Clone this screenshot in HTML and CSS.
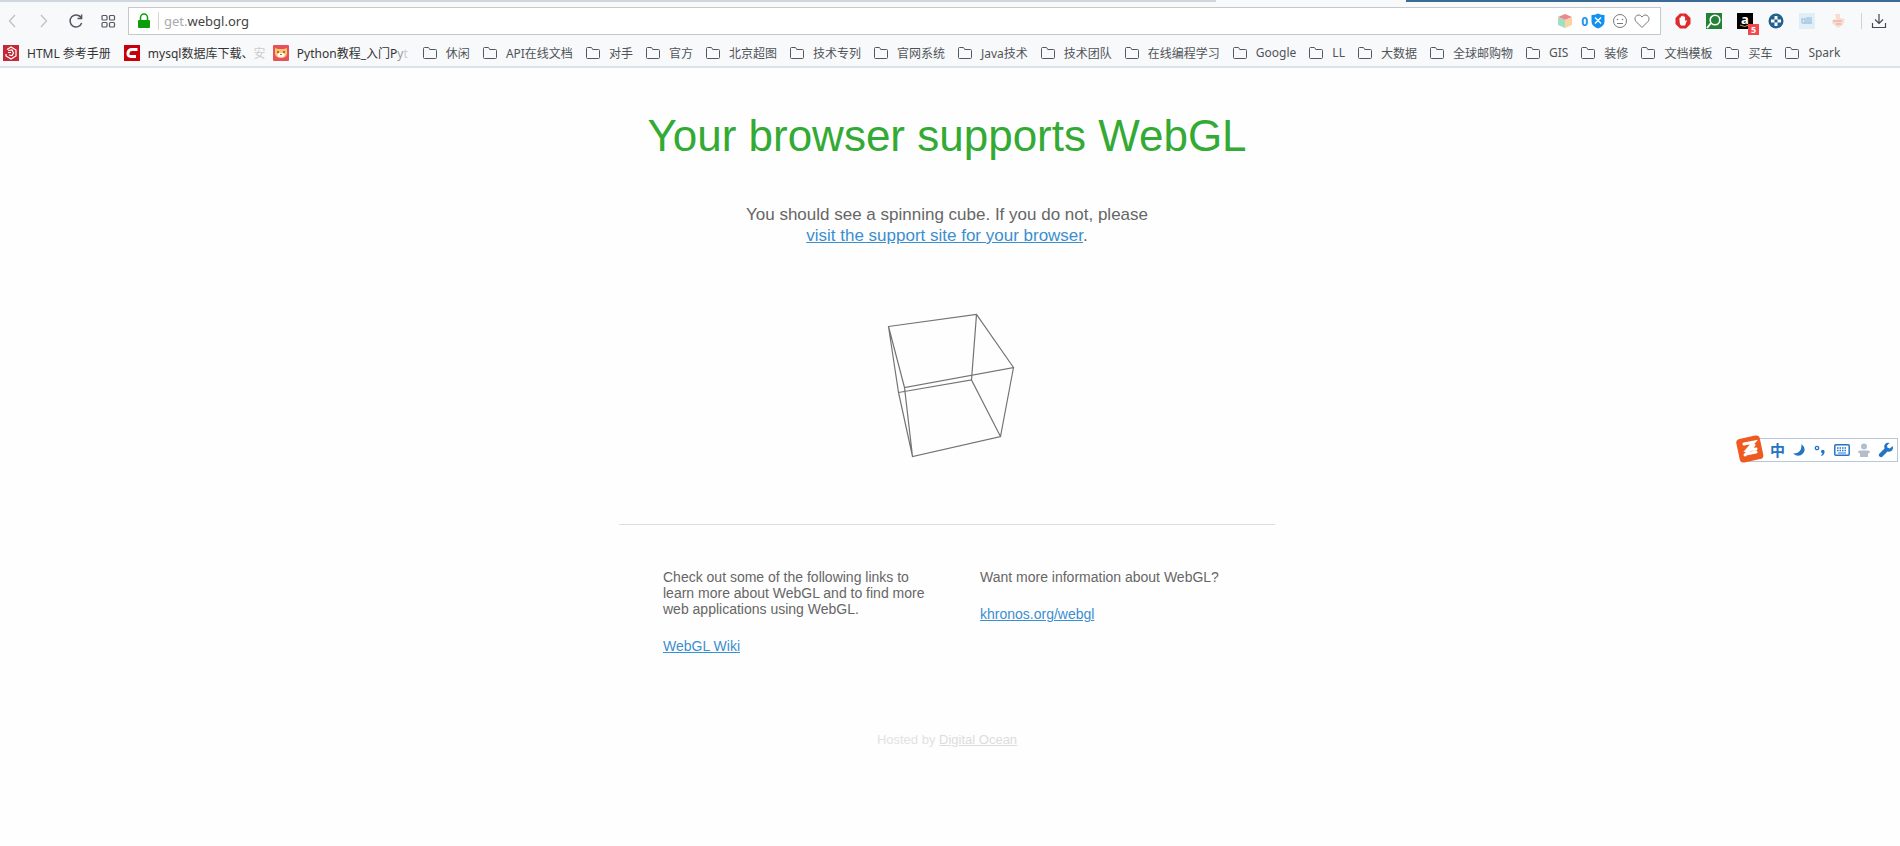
FILE: index.html
```html
<!DOCTYPE html>
<html lang="en">
<head>
  <meta charset="UTF-8">
  <meta name="viewport" content="width=device-width, initial-scale=1.0">
  <title>WebGL</title>
  <link rel="stylesheet" href="styles.css">
</head>
<body>
  <svg class="defs" aria-hidden="true">
    <symbol id="folder" viewBox="0 0 14 14">
      <path d="M.5 2.500q0-1 1-1H5q.7 0 1 .6l.7 1.400h5.800q1 0 1 1v7q0 1-1 1h-11q-1 0-1-1z" fill="none" stroke="#54585c"/>
    </symbol>
  </svg>

  <header class="browser">
    <div class="tab-edge"><span class="edge-left"></span><span class="edge-right"></span></div>

    <div class="toolbar">
      <div class="nav">
        <button aria-label="Back">
          <svg width="16" height="16" viewBox="0 0 16 16"><path d="M11 2 5.500 8 11 14" fill="none" stroke="#bfc2c5" stroke-width="1.300"/></svg>
        </button>
        <button aria-label="Forward">
          <svg width="16" height="16" viewBox="0 0 16 16"><path d="M5 2 10.500 8 5 14" fill="none" stroke="#bfc2c5" stroke-width="1.300"/></svg>
        </button>
        <button aria-label="Reload">
          <svg width="16" height="16" viewBox="0 0 16 16"><path d="M13 4.500A6 6 0 1 0 13.700 10M13.600 1.500V5.500H9.500" fill="none" stroke="#55595d" stroke-width="1.500"/></svg>
        </button>
        <button aria-label="Speed dial">
          <svg width="16" height="16" viewBox="0 0 16 16"><g fill="none" stroke="#55595d" stroke-width="1.200"><rect x="2" y="2.500" width="5" height="4.500" rx="1"/><rect x="9.500" y="2.500" width="5" height="4.500" rx="1"/><rect x="2" y="9.500" width="5" height="4.500" rx="1"/><rect x="9.500" y="9.500" width="5" height="4.500" rx="1"/></g></svg>
        </button>
      </div>

      <div class="address">
        <svg width="14" height="16" viewBox="0 0 14 16"><path d="M3.500 8V4.500a3.500 3.500 0 0 1 7 0V8" fill="none" stroke="#0a9f0a" stroke-width="1.500"/><rect x="1" y="7" width="12" height="8" rx="1" fill="#0a9f0a"/></svg>
        <a class="url" href="#"><span class="sub">get.</span>webgl.org</a>
        <svg width="16" height="16" viewBox="0 0 16 16"><path d="M8 1 15 4 8 7 1 4z" fill="#ed8790"/><path d="M1 4 8 7v8L1 12z" fill="#9fe0c4"/><path d="M15 4 8 7v8l7-3z" fill="#fbd3a0"/></svg>
        <span class="blocked">0</span>
        <svg width="14" height="16" viewBox="0 0 14 16"><path d="M.5 2Q4 2 7 .5 10 2 13.500 2v6.500Q13.500 13 7 15.500.5 13 .5 8.500z" fill="#1391f2"/><path d="m4 4.500 6 6m0-6-6 6" stroke="#fff" stroke-width="1.400"/></svg>
        <svg class="face" width="16" height="16" viewBox="0 0 16 16"><circle cx="8" cy="8" r="6.500" fill="none" stroke="#777"/><path d="M5 10.500h6" stroke="#777"/><circle cx="5.500" cy="6.500" r=".8" fill="#777"/><circle cx="10.500" cy="6.500" r=".8" fill="#777"/></svg>
        <svg width="16" height="16" viewBox="0 0 16 16"><path d="M8 14.500 2 8.500C-1 5 3 .5 6.500 2.500L8 4l1.500-1.500C13 .5 17 5 14 8.500z" fill="none" stroke="#777"/></svg>
      </div>

      <div class="extensions">
        <svg width="16" height="16" viewBox="0 0 16 16"><path d="M5 .5h6L15.500 5v6L11 15.500H5L.5 11V5z" fill="#dd2a2e"/><path d="M4.500 7.500V5q.7-.8 1.300 0V3.500q.7-.8 1.400 0V3q.8-.8 1.500 0v1q.8-.8 1.400 0v4l1.300-.8q.8 0 .3 1L10 12.500H6Q4.500 11 4.500 7.500z" fill="#fff"/></svg>
        <svg width="16" height="16" viewBox="0 0 16 16"><path d="M0 0h16v16H0z" fill="#238136"/><path d="m1 15 4-5" stroke="#fff" stroke-width="2"/><circle cx="9" cy="7" r="4.800" fill="#238136" stroke="#fff" stroke-width="1.600"/></svg>
        <span class="amazon">a<svg class="smile" width="12" height="4" viewBox="0 0 12 4"><path d="M1 1q5 3 9 0" fill="none" stroke="#e79a2c"/></svg><span class="badge">5</span></span>
        <svg width="16" height="16" viewBox="0 0 16 16"><circle cx="8" cy="8" r="7.500" fill="#20618e"/><path d="M6.500 3h3v3.500H13v3H9.500V13h-3V9.500H3v-3h3.500z" fill="#fff"/><path d="M6.500 6.500h3v3h-3z" fill="#20618e"/></svg>
        <svg width="16" height="16" viewBox="0 0 16 16"><path d="M0 0h16v16H0z" fill="#e1eef6"/><path d="M3 10V6h3v5M8 10V5h2v6m2-1V4m-9 6h10" fill="none" stroke="#a8c9e3" stroke-width="1.500"/></svg>
        <svg width="16" height="16" viewBox="0 0 16 16"><path d="M5 1h5v4l5 1-2 6-5 3-6-5 1-4 3 1z" fill="#f8ddd5"/><path d="M3 8h9M6 11h5" stroke="#efbfb3" stroke-width="2"/></svg>
      </div>
      <button class="download" aria-label="Downloads">
        <svg width="16" height="16" viewBox="0 0 16 16"><path d="M8 1v9M4 6.500 8 10.500l4-4M1.500 10v4.500h13V10" fill="none" stroke="#45494d" stroke-width="1.200"/></svg>
      </button>
    </div>

    <nav class="bookmarks">
      <a class="site" href="#">
        <svg width="16" height="16" viewBox="0 0 16 16"><path d="M0 0h16v16H0z" fill="#c42a35"/><path d="M4 4.500 8 2l5 3v6l-5 3-5-3V9M5 5.500l4-.5 1.500 3L9 10.500 6 10M5 7.500h3" fill="none" stroke="#fff" stroke-width="1.200"/></svg>
        <span>HTML 参考手册</span>
      </a>
      <a class="site mysql" href="#">
        <svg width="16" height="16" viewBox="0 0 16 16"><path d="M0 0h16v16H0z" fill="#c70009"/><path d="M13.500 4.500H8q-3.500 0-4 3.500t3 3.500h5" fill="none" stroke="#fff" stroke-width="3"/></svg>
        <span>mysql数据库下载、<span class="faded">安</span></span>
      </a>
      <a class="site python" href="#">
        <svg width="16" height="16" viewBox="0 0 16 16"><rect width="16" height="16" rx="1" fill="#e8505c"/><path d="m2 3 3 1h6l3-1v6q-1 4-6 4T2 9z" fill="#fbc76d"/><path d="M4 7h2m4 0h2" stroke="#a83b3c" stroke-width="1.500"/><ellipse cx="8" cy="10" rx="3.500" ry="2.200" fill="#fff"/><path d="M7 9h2v1H7z" fill="#c45a43"/></svg>
        <span>Python教程_入门P<span class="fading">y</span><span class="faded">t</span></span>
      </a>
      <a href="#"><svg width="14" height="14"><use href="#folder"/></svg>休闲</a>
      <a href="#"><svg width="14" height="14"><use href="#folder"/></svg>API在线文档</a>
      <a href="#"><svg width="14" height="14"><use href="#folder"/></svg>对手</a>
      <a href="#"><svg width="14" height="14"><use href="#folder"/></svg>官方</a>
      <a href="#"><svg width="14" height="14"><use href="#folder"/></svg>北京超图</a>
      <a href="#"><svg width="14" height="14"><use href="#folder"/></svg>技术专列</a>
      <a href="#"><svg width="14" height="14"><use href="#folder"/></svg>官网系统</a>
      <a href="#"><svg width="14" height="14"><use href="#folder"/></svg>Java技术</a>
      <a href="#"><svg width="14" height="14"><use href="#folder"/></svg>技术团队</a>
      <a href="#"><svg width="14" height="14"><use href="#folder"/></svg>在线编程学习</a>
      <a href="#"><svg width="14" height="14"><use href="#folder"/></svg>Google</a>
      <a href="#"><svg width="14" height="14"><use href="#folder"/></svg>LL</a>
      <a href="#"><svg width="14" height="14"><use href="#folder"/></svg>大数据</a>
      <a href="#"><svg width="14" height="14"><use href="#folder"/></svg>全球邮购物</a>
      <a href="#"><svg width="14" height="14"><use href="#folder"/></svg>GIS</a>
      <a href="#"><svg width="14" height="14"><use href="#folder"/></svg>装修</a>
      <a href="#"><svg width="14" height="14"><use href="#folder"/></svg>文档模板</a>
      <a href="#"><svg width="14" height="14"><use href="#folder"/></svg>买车</a>
      <a href="#"><svg width="14" height="14"><use href="#folder"/></svg>Spark</a>
    </nav>
  </header>

  <main class="page">
    <h1>Your browser supports WebGL</h1>
    <p class="support">You should see a spinning cube. If you do not, please<br><a href="#">visit the support site for your browser</a>.</p>
    <svg class="cube" width="140" height="160" viewBox="880 306 140 160" role="img" aria-label="Spinning cube">
      <path d="M889.500 326.500 977.500 314.500 1014.500 367.500 905.500 387.500zM899.500 392.500 972.500 380 1001.500 436.500 913.500 456.500zM889.500 326.500 899.500 392.500M977.500 314.500 972.500 380M1014.500 367.500 1001.500 436.500M905.500 387.500 913.500 456.500" fill="none" stroke="#737373" stroke-width="1.200"/>
    </svg>

    <section class="info">
      <div>
        <p>Check out some of the following links to learn more about WebGL and to find more web applications using WebGL.</p>
        <p><a href="#">WebGL Wiki</a></p>
      </div>
      <div>
        <p>Want more information about WebGL?</p>
        <p><a href="#">khronos.org/webgl</a></p>
      </div>
    </section>

    <footer>Hosted by <a href="#">Digital Ocean</a></footer>
  </main>

  <div class="ime">
    <svg class="ime-logo" width="30" height="30" viewBox="0 0 30 30"><rect x="3" y="2" width="24" height="24" rx="4" fill="#ee5a20" transform="rotate(-12 15 15)"/><path d="m9 9 10-2-7 8 9-1M10 20l9-10m-8 9 10-2" fill="none" stroke="#fff" stroke-width="3" stroke-linecap="round"/></svg>
    <button>中</button>
    <button aria-label="Moon"><svg width="14" height="14" viewBox="0 0 14 14"><path d="M9.500 1Q15 6 11 10.500 6.500 15 1 10.500 10 11 9.500 1z" fill="#2474c4"/></svg></button>
    <button aria-label="Punctuation"><svg width="14" height="14" viewBox="0 0 14 14"><circle cx="4" cy="5" r="1.700" fill="none" stroke="#2474c4" stroke-width="1.300"/><path d="M8 8.500a1.800 1.800 0 1 1 3.600 0q0 3-3 4.500l-.6-.7q1.500-1 1.500-2Q8 10 8 8.500z" fill="#2474c4"/></svg></button>
    <button aria-label="Keyboard"><svg width="16" height="14" viewBox="0 0 16 14"><rect x=".8" y="1.800" width="14.400" height="10.400" rx="1" fill="none" stroke="#2474c4" stroke-width="1.500"/><path d="M3 5h10M3 7.500h10" stroke="#2474c4" stroke-width="1.500" stroke-dasharray="1.500 1"/><path d="M4 10h8" stroke="#2474c4"/></svg></button>
    <button aria-label="Account"><svg width="14" height="14" viewBox="0 0 14 14"><circle cx="7" cy="3.500" r="3" fill="#b4bdcc"/><path d="M1 9.500Q1 7 4 7.500h6q3-.5 3 2l-2 1V14H3v-3.500z" fill="#b4bdcc"/></svg></button>
    <button aria-label="Settings"><svg width="16" height="16" viewBox="0 0 16 16"><path d="M14.500 4 12 6.500l-2.500-.8L9 3.500 11.500 1Q8 0 6.500 3 6 4.500 6.500 6.500L1 12q-.7 1.500.5 2.500T4 15l5.500-5.500q3 .8 4.800-1.200 1.500-2 .2-4.300z" fill="#2474c4"/></svg></button>
  </div>
</body>
</html>
```
FILE: styles.css
```css
* {
  box-sizing: border-box;
}
body {
  margin: 0;
  background: #fefefe;
  font-family: "Liberation Sans", Arial, sans-serif;
  color: #666;
}
svg {
  flex: none;
}
button {
  display: flex;
  padding: 0;
  border: none;
  background: none;
  cursor: pointer;
}
.defs {
  display: block;
  width: 0;
  height: 0;
}

/* browser chrome */
.browser {
  background: #f8f9fb;
  border-bottom: 2px solid #dfe2e5;
  font-family: "Noto Sans", "Noto Sans CJK SC", sans-serif;
  font-size: 12px;
}
.tab-edge {
  display: flex;
  justify-content: space-between;
  height: 2px;
}
.edge-left {
  width: 64%;
  background: #cfd6dd;
}
.edge-right {
  width: 26%;
  background: #3b6a94;
}
.toolbar {
  display: flex;
  align-items: center;
  padding: 5px 13px 4px 4px;
}
.nav {
  display: flex;
  gap: 16px;
}
.address {
  display: flex;
  flex: 1;
  align-items: center;
  height: 28px;
  margin: 0 14px 0 12px;
  padding: 0 10px 0 8px;
  border: 1px solid #c6c9cc;
  background: #fff;
}
.url {
  flex: 1;
  margin-left: 7px;
  padding-left: 5px;
  border-left: 1px solid #d5d5d5;
  font-size: 13px;
  line-height: 18px;
  color: #444;
  text-decoration: none;
}
.sub {
  color: #aaa;
}
.blocked {
  margin: 0 3px 0 8px;
  font-weight: bold;
  color: #1391f2;
}
.face {
  margin: 0 6px 0 7px;
}
.extensions {
  display: flex;
  gap: 15px;
  padding-right: 15px;
  border-right: 1px solid #d0d3d6;
}
.download {
  margin-left: 9px;
}
.amazon {
  position: relative;
  width: 16px;
  height: 16px;
  background: #000;
  color: #fff;
  font-weight: bold;
  font-size: 13px;
  line-height: 12px;
  text-align: center;
}
.smile {
  position: absolute;
  left: 2px;
  bottom: 1px;
}
.badge {
  position: absolute;
  left: 11px;
  top: 11px;
  width: 11px;
  height: 11px;
  background: #f4474d;
  font-size: 9px;
  line-height: 11px;
}
.bookmarks {
  display: flex;
  align-items: center;
  gap: 13px;
  height: 27px;
  padding-left: 3px;
  white-space: nowrap;
}
.bookmarks a {
  display: flex;
  flex: none;
  align-items: center;
  gap: 9px;
  color: #505458;
  text-decoration: none;
}
.bookmarks .site {
  gap: 8px;
  color: #333;
}
.mysql {
  width: 136px;
}
.python {
  width: 137px;
}
.fading {
  color: #999;
}
.faded {
  color: #ccc;
}

/* page */
.page {
  display: flex;
  flex-direction: column;
  align-items: center;
  padding: 43px 6px 40px 0;
}
h1 {
  margin: 0;
  font-size: 44px;
  font-weight: normal;
  line-height: 50px;
  color: #3a3;
}
p {
  margin: 0;
}
a {
  color: #3b8ed0;
}
.support {
  margin-top: 43px;
  font-size: 17px;
  line-height: 21px;
  text-align: center;
}
.cube {
  margin: 60px 0 58px 4px;
}
.info {
  display: grid;
  grid-template-columns: 270px 1fr;
  gap: 47px;
  width: 656px;
  padding: 44px 44px 0;
  border-top: 1px solid #ddd;
  font-size: 14px;
  line-height: 16px;
}
.info p + p {
  margin-top: 21px;
}
footer {
  margin-top: 78px;
  font-size: 13px;
  line-height: 16px;
  color: #e2e2e2;
}
footer a {
  color: #dcdcdc;
}

/* input method bar */
.ime {
  position: fixed;
  right: 2px;
  top: 438px;
  display: flex;
  align-items: center;
  gap: 7px;
  height: 24px;
  padding-right: 3px;
  border: 1px solid #b6c8d8;
  background: #fff;
}
.ime-logo {
  margin: 0 -2px 0 -14px;
}
.ime button {
  font-family: "Noto Sans CJK SC", sans-serif;
  font-size: 15px;
  font-weight: bold;
  line-height: 20px;
  color: #2474c4;
}
```
